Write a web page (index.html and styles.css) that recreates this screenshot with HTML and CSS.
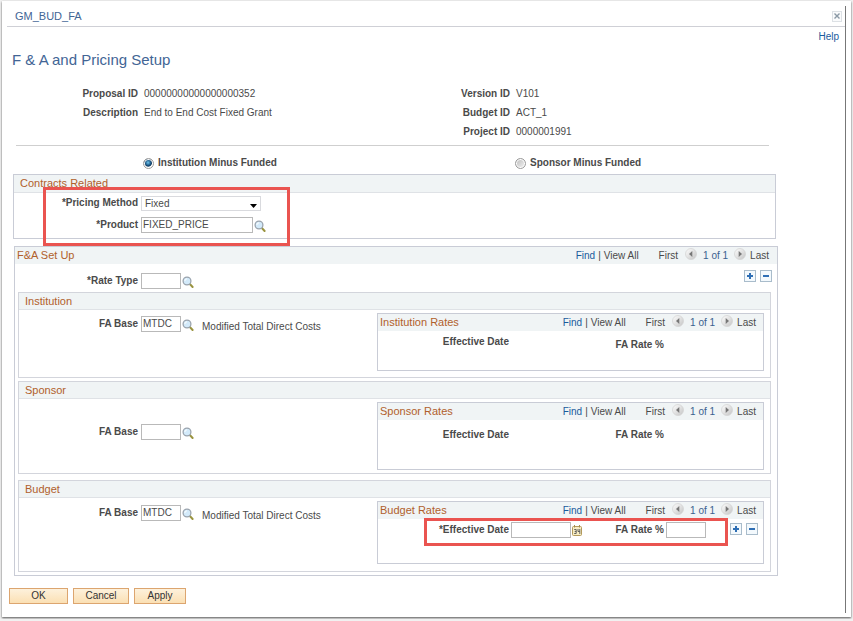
FILE: index.html
```html
<!DOCTYPE html>
<html lang="en">
<head>
<meta charset="utf-8">
<title>F &amp; A and Pricing Setup</title>
<link rel="stylesheet" href="styles.css">
</head>
<body>
<svg class="defs" width="0" height="0" aria-hidden="true">
  <defs>
    <linearGradient id="ball" x1="0" y1="0" x2="1" y2="1"><stop offset="0" stop-color="#fff"/><stop offset="1" stop-color="#c4c4c4"/></linearGradient>
    <symbol id="lookup" viewBox="0 0 12 12">
      <path d="M7.6 7.8 10.6 11" stroke="#9a9440" stroke-width="2" stroke-linecap="round"/>
      <circle cx="5" cy="5" r="3.9" fill="#d3eafa" stroke="#9aa3ad" stroke-width="1.3"/>
      <path d="M2.8 5A2.3 2.3 0 0 1 5 2.8" fill="none" stroke="#fff" stroke-width="1"/>
    </symbol>
    <symbol id="prev" viewBox="0 0 12 12">
      <circle cx="6" cy="6" r="5.5" fill="url(#ball)" stroke="#d2d2d2" stroke-width=".7"/>
      <path d="M7.3 3v6L4 6z" fill="#777"/>
    </symbol>
    <symbol id="next" viewBox="0 0 12 12">
      <circle cx="6" cy="6" r="5.5" fill="url(#ball)" stroke="#d2d2d2" stroke-width=".7"/>
      <path d="M4.7 3v6L8 6z" fill="#777"/>
    </symbol>
    <symbol id="calendar" viewBox="0 0 10 12">
      <rect x=".5" y="1.500" width="9" height="9" rx="1" fill="#f7edc4" stroke="#b39a5c"/>
      <path d="M2.500 0v2.500M7.500 0v2.500" stroke="#a58c4c"/>
      <path d="M2.200 4.500h2v4h-2M2.700 6.500h1.500M6 4v2.500h1.800M7.800 4v5" fill="none" stroke="#555" stroke-width=".9"/>
    </symbol>
    <symbol id="plus" viewBox="0 0 10 10"><path d="M5 2v6M2 5h6" stroke="#2f6fb5" stroke-width="2"/></symbol>
    <symbol id="minus" viewBox="0 0 10 10"><path d="M2 5h6" stroke="#2f6fb5" stroke-width="2"/></symbol>
  </defs>
</svg>
<main class="window">
  <div class="dialog">
    <header class="titlebar">
      <span>GM_BUD_FA</span>
      <button type="button" class="close" aria-label="Close"><svg width="6" height="6" viewBox="0 0 6 6"><path d="M.5.5l5 5M5.5.5l-5 5" stroke="#8a98a5" stroke-width="1.4"/></svg></button>
    </header>
    <div class="help"><a href="#">Help</a></div>
    <form class="content">
      <h1>F &amp; A and Pricing Setup</h1>
      <dl class="summary">
        <dt>Proposal ID</dt><dd>00000000000000000352</dd>
        <dt>Version ID</dt><dd>V101</dd>
        <dt>Description</dt><dd>End to End Cost Fixed Grant</dd>
        <dt>Budget ID</dt><dd>ACT_1</dd>
        <dt class="right">Project ID</dt><dd>0000001991</dd>
      </dl>
      <div class="modes">
        <label><input type="radio" name="mode" checked>Institution Minus Funded</label>
        <label><input type="radio" name="mode">Sponsor Minus Funded</label>
      </div>

      <section class="panel contracts">
        <h2 class="bar ruled">Contracts Related</h2>
        <div class="contracts-body">
          <div class="field">
            <label for="method">*Pricing Method</label>
            <span class="drop"><select id="method"><option>Fixed</option></select><svg width="7" height="4" viewBox="0 0 7 4"><path d="M0 0h7L3.500 4z"/></svg></span>
          </div>
          <div class="field">
            <label for="product">*Product</label>
            <input id="product" class="wide" type="text" value="FIXED_PRICE">
            <button type="button" class="icon" aria-label="Look up Product"><svg width="12" height="12"><use href="#lookup"/></svg></button>
          </div>
        </div>
        <div class="callout callout-pricing"></div>
      </section>

      <section class="panel setup">
        <div class="bar">
          <h2>F&amp;A Set Up</h2>
          <nav class="pager"><a href="#">Find</a><i>|</i><span>View All</span><span class="first">First</span><svg width="12" height="12"><use href="#prev"/></svg><b>1 of 1</b><svg width="12" height="12"><use href="#next"/></svg><span class="last">Last</span></nav>
        </div>
        <div class="rate-type">
          <div class="field">
            <label for="ratetype">*Rate Type</label>
            <input id="ratetype" type="text">
            <button type="button" class="icon" aria-label="Look up Rate Type"><svg width="12" height="12"><use href="#lookup"/></svg></button>
          </div>
          <div class="rowbtns">
            <button type="button" aria-label="Add row"><svg width="10" height="10"><use href="#plus"/></svg></button>
            <button type="button" aria-label="Delete row"><svg width="10" height="10"><use href="#minus"/></svg></button>
          </div>
        </div>

        <section class="group institution">
          <h3 class="bar ruled">Institution</h3>
          <div class="group-body">
            <div class="field">
              <label for="base1">FA Base</label>
              <input id="base1" type="text" value="MTDC">
              <button type="button" class="icon" aria-label="Look up FA Base"><svg width="12" height="12"><use href="#lookup"/></svg></button>
              <span class="desc">Modified Total Direct Costs</span>
            </div>
            <div class="rates">
              <div class="bar">
                <h4>Institution Rates</h4>
                <nav class="pager"><a href="#">Find</a><i>|</i><span>View All</span><span class="first">First</span><svg width="12" height="12"><use href="#prev"/></svg><b>1 of 1</b><svg width="12" height="12"><use href="#next"/></svg><span class="last">Last</span></nav>
              </div>
              <div class="rate-row"><span class="date">Effective Date</span><span class="pct">FA Rate %</span></div>
            </div>
          </div>
        </section>

        <section class="group sponsor">
          <h3 class="bar ruled">Sponsor</h3>
          <div class="group-body">
            <div class="field">
              <label for="base2">FA Base</label>
              <input id="base2" type="text">
              <button type="button" class="icon" aria-label="Look up FA Base"><svg width="12" height="12"><use href="#lookup"/></svg></button>
            </div>
            <div class="rates">
              <div class="bar">
                <h4>Sponsor Rates</h4>
                <nav class="pager"><a href="#">Find</a><i>|</i><span>View All</span><span class="first">First</span><svg width="12" height="12"><use href="#prev"/></svg><b>1 of 1</b><svg width="12" height="12"><use href="#next"/></svg><span class="last">Last</span></nav>
              </div>
              <div class="rate-row"><span class="date">Effective Date</span><span class="pct">FA Rate %</span></div>
            </div>
          </div>
        </section>

        <section class="group budget">
          <h3 class="bar ruled">Budget</h3>
          <div class="group-body">
            <div class="field">
              <label for="base3">FA Base</label>
              <input id="base3" type="text" value="MTDC">
              <button type="button" class="icon" aria-label="Look up FA Base"><svg width="12" height="12"><use href="#lookup"/></svg></button>
              <span class="desc">Modified Total Direct Costs</span>
            </div>
            <div class="rates">
              <div class="bar">
                <h4>Budget Rates</h4>
                <nav class="pager"><a href="#">Find</a><i>|</i><span>View All</span><span class="first">First</span><svg width="12" height="12"><use href="#prev"/></svg><b>1 of 1</b><svg width="12" height="12"><use href="#next"/></svg><span class="last">Last</span></nav>
              </div>
              <div class="rate-row">
                <label class="date" for="effdt">*Effective Date</label>
                <input id="effdt" class="date-box" type="text">
                <button type="button" class="icon" aria-label="Choose a date"><svg width="10" height="12"><use href="#calendar"/></svg></button>
                <label class="pct" for="farate">FA Rate %</label>
                <div class="pct-controls">
                  <input id="farate" type="text">
                  <div class="rowbtns">
                    <button type="button" aria-label="Add row"><svg width="10" height="10"><use href="#plus"/></svg></button>
                    <button type="button" aria-label="Delete row"><svg width="10" height="10"><use href="#minus"/></svg></button>
                  </div>
                </div>
              </div>
              <div class="callout callout-rate"></div>
            </div>
          </div>
        </section>
      </section>
    </form>
    <footer class="actions">
      <button type="button" class="ok">OK</button>
      <button type="button" class="cancel">Cancel</button>
      <button type="button">Apply</button>
    </footer>
  </div>
</main>
</body>
</html>
```
FILE: styles.css
```css
* { box-sizing: border-box; }

body {
  margin: 0;
  padding: 1px 2px 2px;
  background: #f1f1f1;
  color: #4a4a4a;
  font: 10px/16px "Liberation Sans", Arial, sans-serif;
}

.defs { position: absolute; }
svg { display: block; flex: none; }
h1, h2, h3, h4, dl, dd { margin: 0; font-weight: normal; }
a { color: #1a5a9c; text-decoration: none; }
button, input, select { font: inherit; color: inherit; margin: 0; }

.window {
  padding: 5px 5px 4px;
  background: #fff;
  box-shadow: 0 1px 2px #555;
}

.dialog { border-right: 1px solid #777; padding-bottom: 9px; }

.titlebar {
  display: flex;
  align-items: center;
  justify-content: space-between;
  height: 21px;
  padding: 0 3px 0 8px;
  border-bottom: 1px solid #cfd0d6;
  color: #426595;
  font-size: 11px;
}

.close {
  display: grid;
  place-items: center;
  width: 10px;
  height: 11px;
  padding: 0;
  border: 1px solid #dde1e5;
  background: #fafbfc;
}

.help { padding: 1px 6px 0 0; text-align: right; line-height: 18px; }

.content { margin: 2px 69px 0 6px; }

h1 { margin-left: -1px; color: #426595; font-size: 15px; line-height: 24px; }

.summary {
  display: grid;
  grid-template-columns: 125px 1fr 125px 1fr;
  column-gap: 6px;
  margin-top: 12px;
  padding-right: 25px;
  line-height: 19px;
}
.summary dt { text-align: right; font-weight: bold; }
.summary .right { grid-column: 3; }

.modes {
  display: grid;
  grid-template-columns: 372px 1fr;
  margin: 4px 7px 3px 3px;
  padding: 9px 0 0 127px;
  border-top: 1px solid #cfcfcf;
  font-weight: bold;
}
.modes label { display: flex; align-items: center; gap: 4px; }
.modes input {
  appearance: none;
  width: 11px;
  height: 11px;
  border: 1px solid #9a9a9a;
  border-radius: 50%;
  background: linear-gradient(135deg, #bbb, #f4f4f4);
  box-shadow: inset 0 0 0 1px #fff;
}
.modes input:checked { background: radial-gradient(circle at 45% 40%, #6fc6ef 0, #174f7c 40%, #123c5e 50%, #fff 62%); }

.panel, .group, .rates { border: 1px solid #c9ccd6; }

.bar {
  display: flex;
  align-items: center;
  justify-content: space-between;
  background: #f0f4f5;
  color: #b0602c;
  font-size: 11px;
  line-height: 17px;
  padding: 0 8px 0 2px;
}
.bar h2, .bar h4 { font-size: 11px; }
.bar.ruled { padding-left: 6px; border-bottom: 1px solid #dfe2e6; }

.pager { display: flex; align-items: center; font-size: 10px; color: #4a4a4a; }
.pager i { margin: 0 3px; font-style: normal; }
.pager .first { margin: 0 7px 0 20px; }
.pager .last { margin-left: 4px; }
.pager b { margin: 0 6px; font-weight: normal; color: #3a618f; }
.pager svg { margin-bottom: 3px; }

.field { display: flex; align-items: center; }
.field label { width: 119px; margin-right: 3px; text-align: right; font-weight: bold; flex: none; }

input[type="text"] {
  width: 40px;
  height: 16px;
  padding: 0 1px;
  border: 1px solid #b9b9b9;
  background: #fff;
}
input.wide { width: 112px; }
input.date-box { width: 60px; }

.icon { padding: 0; border: 0; background: none; flex: none; margin: 1px 0 0 1px; }

.contracts { position: relative; }
.contracts-body { display: grid; gap: 6px; padding: 2px 0 5px 5px; }

.drop { position: relative; }
.drop select {
  display: block;
  appearance: none;
  width: 120px;
  height: 15px;
  padding: 0 3px;
  border: 1px solid #d9dade;
  background: #fff;
  line-height: 13px;
}
.drop svg { position: absolute; right: 4px; bottom: 3px; pointer-events: none; fill: #000; }

.callout { position: absolute; border: 3px solid #ea5450; pointer-events: none; }
.callout-pricing { left: 29px; top: 12px; width: 247px; height: 59px; }
.callout-rate { left: 46px; top: 16px; right: 35px; height: 28px; }

.setup { margin: 7px -2px 0 1px; padding-bottom: 3px; }

.rate-type { display: flex; justify-content: space-between; padding: 6px 5px 3px 4px; }
.rate-type .field { margin-top: 3px; }

.rowbtns { display: flex; gap: 4px; }
.rowbtns button {
  width: 12px;
  height: 12px;
  padding: 0;
  border: 1px solid #a9bccb;
  background: #f3f9fd;
}

.group { margin: 0 6px 0 3px; border-color: #d3d5dc; }
.group .bar.ruled { line-height: 16px; }
.group-body { display: grid; grid-template-columns: 1fr 387px; align-items: start; padding: 3px 6px 6px 0; }
.institution .field { padding-top: 3px; }
.sponsor { margin-top: 3px; margin-bottom: 6px; }
.sponsor .group-body { padding-bottom: 3px; }
.sponsor .field { padding-top: 22px; }
.budget .field { padding-top: 4px; }
.budget .group-body { padding-bottom: 7px; }

.desc { align-self: flex-end; margin-left: 8px; line-height: 11px; white-space: nowrap; }

.rates { position: relative; min-height: 58px; }
.rates .bar { padding-right: 7px; }
.sponsor .rates { min-height: 68px; }
.budget .rates { min-height: 63px; }

.rate-row { display: flex; align-items: center; padding: 3px 0; font-weight: bold; }
.rate-row .date { width: 131px; text-align: right; margin-right: 2px; }
.rate-row .pct { margin-left: auto; margin-right: 99px; }
.institution .rate-row .pct { padding-top: 3px; }
.institution .rate-row { align-items: flex-start; }
.rate-row input, .rate-row button { font-weight: normal; }
.sponsor .rate-row { padding-top: 7px; }
.budget .rate-row .pct { margin-right: 2px; }
.pct-controls { display: flex; align-items: center; justify-content: space-between; width: 97px; padding-right: 5px; }
.pct-controls .rowbtns { margin-bottom: 2px; }

.actions { display: flex; gap: 5px; margin: 12px 0 0 2px; }
.actions button {
  min-width: 52px;
  height: 16px;
  padding: 0;
  border: 1px solid #dca56f;
  background: linear-gradient(#fdf1dc, #fbe0b4);
  color: #333;
  line-height: 14px;
}
.actions .ok { width: 59px; }
.actions .cancel { width: 56px; }
```
